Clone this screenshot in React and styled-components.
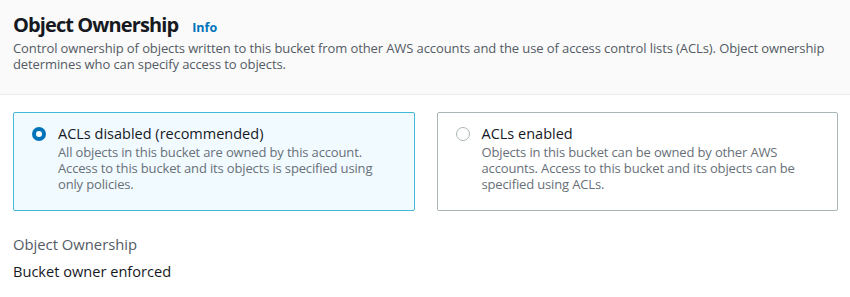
import React from "react";
import styled, { createGlobalStyle } from "styled-components";

const GlobalStyle = createGlobalStyle`
  body {
    margin: 0;
    background: #ffffff;
    font-family: "Open Sans", "Noto Sans", sans-serif;
    color: #16191f;
  }
`;

const Page = styled.div`
  width: 850px;
  height: 297px;
  overflow: hidden;
`;

const Header = styled.header`
  background: #fafafa;
  border-bottom: 1px solid #eaeded;
  padding: 11px 10px 0 13px;
  height: 83px;
`;

const TitleRow = styled.div`
  display: flex;
  align-items: baseline;
  gap: 14px;
  h2 {
    margin: 0;
    font-size: 20px;
    font-weight: 700;
    letter-spacing: -0.9px;
    line-height: 28px;
  }
`;

const InfoLink = styled.a`
  color: #0073bb;
  font-size: 12.5px;
  font-weight: 700;
  text-decoration: none;
`;

const Description = styled.p`
  margin: 1px 0 0;
  font-size: 13px;
  letter-spacing: -0.1px;
  line-height: 16px;
  color: #545b64;
`;

const Body = styled.div`
  padding: 17px 12px 0 13px;
`;

const Tiles = styled.div`
  display: grid;
  grid-template-columns: 1fr 1fr;
  gap: 22px;
`;

const Tile = styled.label`
  display: flex;
  gap: 12px;
  height: 99px;
  box-sizing: border-box;
  padding: 11px 16px 0 18px;
  border-radius: 2px;
  border: 1px solid ${(p) => (p.$checked ? "#44b9d6" : "#aab7b8")};
  background: ${(p) => (p.$checked ? "#f1faff" : "#ffffff")};
`;

const Radio = styled.span`
  flex: none;
  width: 14px;
  height: 14px;
  margin-top: 3px;
  border-radius: 50%;
  box-sizing: border-box;
  border: ${(p) => (p.$checked ? "4px solid #0073bb" : "1px solid #aab7b8")};
  background: #ffffff;
`;

const TileText = styled.div`
  display: flex;
  flex-direction: column;
`;

const TileLabel = styled.span`
  font-size: 14.5px;
  line-height: 19px;
  color: #16191f;
`;

const TileDescription = styled.span`
  margin-top: 1px;
  font-size: 13px;
  letter-spacing: -0.15px;
  line-height: 16px;
  color: #687078;
`;

const KeyValue = styled.div`
  margin-top: 24px;
  display: flex;
  flex-direction: column;
  gap: 7.5px;
`;

const Key = styled.span`
  font-size: 14.8px;
  line-height: 19px;
  color: #545b64;
`;

const Value = styled.span`
  font-size: 14.6px;
  line-height: 19px;
  color: #16191f;
`;

const options = [
  {
    id: "disabled",
    label: "ACLs disabled (recommended)",
    description:
      "All objects in this bucket are owned by this account. Access to this bucket and its objects is specified using only policies.",
    checked: true,
  },
  {
    id: "enabled",
    label: "ACLs enabled",
    description:
      "Objects in this bucket can be owned by other AWS accounts. Access to this bucket and its objects can be specified using ACLs.",
    checked: false,
  },
];

const App = () => {
  return (
    <Page>
      <GlobalStyle />
      <Header>
        <TitleRow>
          <h2>Object Ownership</h2>
          <InfoLink href="#">Info</InfoLink>
        </TitleRow>
        <Description>
          Control ownership of objects written to this bucket from other AWS
          accounts and the use of access control lists (ACLs). Object ownership
          determines who can specify access to objects.
        </Description>
      </Header>
      <Body>
        <Tiles>
          {options.map((o) => (
            <Tile key={o.id} $checked={o.checked}>
              <Radio $checked={o.checked} />
              <TileText>
                <TileLabel>{o.label}</TileLabel>
                <TileDescription>{o.description}</TileDescription>
              </TileText>
            </Tile>
          ))}
        </Tiles>
        <KeyValue>
          <Key>Object Ownership</Key>
          <Value>Bucket owner enforced</Value>
        </KeyValue>
      </Body>
    </Page>
  );
};

export default App;
